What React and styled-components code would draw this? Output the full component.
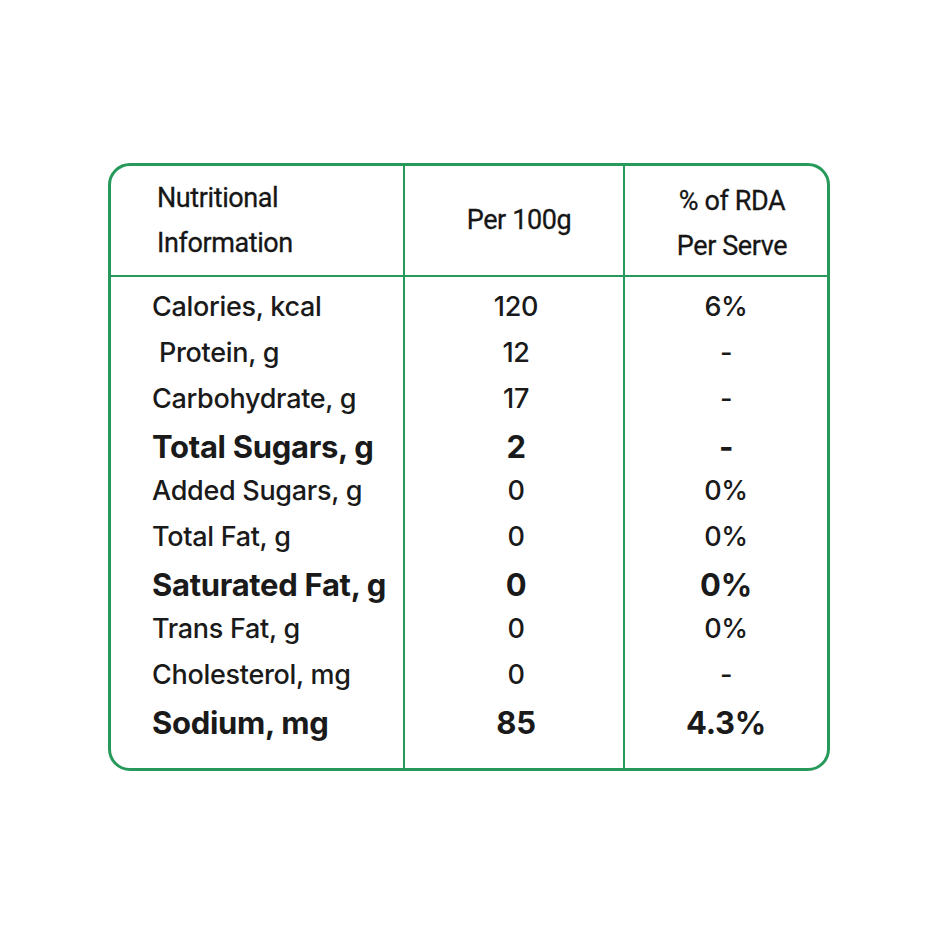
import React from "react";
import styled, { createGlobalStyle } from "styled-components";

const Global = createGlobalStyle`
  html, body { margin: 0; padding: 0; background: #ffffff; }
  body { font-family: "Inter", "Open Sans", sans-serif; color: #1a1a1a; }
`;

const GREEN = "#279a5b";

const Page = styled.div`
  width: 940px;
  height: 940px;
  padding-top: 163px;
  box-sizing: border-box;
`;

const Card = styled.div`
  width: 722px;
  height: 608px;
  margin: 0 0 0 108px;
  box-sizing: border-box;
  border: 3px solid ${GREEN};
  border-radius: 22px;
  display: grid;
  grid-template-columns: 292px 220px 1fr;
  grid-template-rows: 111px 1fr;
  overflow: hidden;
`;

const HeadCell = styled.div`
  border-bottom: 2px solid ${GREEN};
  border-left: ${(p) => (p.$first ? "none" : `2px solid ${GREEN}`)};
  display: flex;
  flex-direction: column;
  justify-content: center;
  align-items: ${(p) => (p.$first ? "flex-start" : "center")};
  padding-left: ${(p) => (p.$first ? "46px" : `${p.$nudge || 0}px`)};
  padding-top: ${(p) => p.$shift || 0}px;
  font-family: "Roboto", "Liberation Sans", sans-serif;
  font-size: 27px;
  font-weight: 400;
  line-height: 45px;
  color: #161616;
  letter-spacing: -0.4px;
  -webkit-text-stroke: 0.3px #161616;
`;

const BodyCol = styled.div`
  border-left: ${(p) => (p.$first ? "none" : `2px solid ${GREEN}`)};
  display: flex;
  flex-direction: column;
  align-items: ${(p) => (p.$first ? "flex-start" : "center")};
  padding-top: 6px;
  padding-left: ${(p) => (p.$first ? "41px" : `${p.$nudge || 0}px`)};
`;

const Line = styled.div`
  height: 46px;
  display: flex;
  align-items: center;
  white-space: pre;
  padding-top: ${(p) => (p.$bold ? "5px" : "0")};
  box-sizing: border-box;
  font-size: ${(p) => (p.$bold ? "31px" : "27px")};
  font-weight: ${(p) => (p.$bold ? 700 : 500)};
  color: #1a1a1a;
  letter-spacing: -0.3px;
`;

const rows = [
  ["Calories, kcal", "120", "6%"],
  [" Protein, g", "12", "-"],
  ["Carbohydrate, g", "17", "-"],
  ["Total Sugars, g", "2", "-", true],
  ["Added Sugars, g", "0", "0%"],
  ["Total Fat, g", "0", "0%"],
  ["Saturated Fat, g", "0", "0%", true],
  ["Trans Fat, g", "0", "0%"],
  ["Cholesterol, mg", "0", "-"],
  ["Sodium, mg", "85", "4.3%", true],
];

export default function App() {
  return (
    <>
      <Global />
      <Page>
        <Card>
          <HeadCell $first>
            <span>Nutritional</span>
            <span>Information</span>
          </HeadCell>
          <HeadCell $shift={-12} $nudge={10}>
            <span>Per 100g</span>
          </HeadCell>
          <HeadCell $shift={6} $nudge={12}>
            <span>% of RDA</span>
            <span>Per Serve</span>
          </HeadCell>
          {[0, 1, 2].map((c) => (
            <BodyCol key={c} $first={c === 0} $nudge={c === 1 ? 4 : 0}>
              {rows.map((r, i) => (
                <Line key={i} $bold={r[3]}>
                  {r[c]}
                </Line>
              ))}
            </BodyCol>
          ))}
        </Card>
      </Page>
    </>
  );
}
